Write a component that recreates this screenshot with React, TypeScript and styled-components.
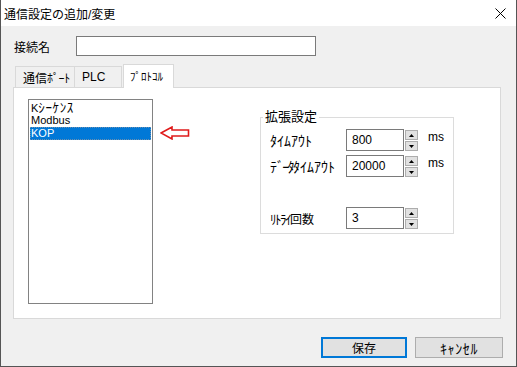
import styled, { createGlobalStyle } from "styled-components";

const GlobalStyle = createGlobalStyle`
    html, body {
        margin: 0;
        padding: 0;
        background: #f0f0f0;
    }
    body {
        font-family: "Liberation Sans", "Noto Sans CJK JP", sans-serif;
        font-size: 12px;
        color: #000;
    }
`;

const Window = styled.div`
    width: 517px;
    height: 367px;
    box-sizing: border-box;
    border: 1px solid #555;
    border-top: none;
    background: #f0f0f0;
    display: flex;
    flex-direction: column;
`;

const TitleBar = styled.div`
    height: 26px;
    flex-shrink: 0;
    background: #fff;
    display: flex;
    align-items: center;
    justify-content: space-between;
    padding: 0 10px 0 3px;
    font-size: 12px;
`;

const CloseIcon = styled.svg`
    width: 11px;
    height: 11px;
`;

const Body = styled.div`
    flex: 1;
    display: flex;
    flex-direction: column;
    padding: 10px 15px 8px 12px;
`;

const NameRow = styled.div`
    display: flex;
    align-items: center;
    height: 20px;
    padding-left: 1px;
`;

const NameLabel = styled.span`
    width: 62px;
    font-size: 12px;
`;

const TextBox = styled.div`
    width: 240px;
    height: 20px;
    box-sizing: border-box;
    border: 1px solid #7a7a7a;
    background: #fff;
`;

// half-width katakana: the original UI font draws them larger than Noto does
const Kana = styled.span<{ size?: number; sp?: number }>`
    font-size: ${(p) => p.size ?? 14}px;
    letter-spacing: ${(p) => p.sp ?? 0}px;
`;

const TabStrip = styled.div`
    margin-top: 8px;
    height: 23px;
    display: flex;
    align-items: flex-end;
    padding-left: 2px;
`;

const Tab = styled.div<{ active?: boolean; w: number }>`
    position: relative;
    box-sizing: border-box;
    width: ${(p) => p.w}px;
    height: ${(p) => (p.active ? 24 : 21)}px;
    margin-bottom: ${(p) => (p.active ? -1 : 0)}px;
    margin-left: ${(p) => (p.active ? 1 : -1)}px;
    background: ${(p) => (p.active ? "#fff" : "#f0f0f0")};
    border: 1px solid #d9d9d9;
    border-bottom: none;
    display: flex;
    align-items: ${(p) => (p.active ? "flex-start" : "center")};
    padding: ${(p) => (p.active ? "3px 0 0 6px" : "0 0 0 7px")};
    font-size: ${(p) => (p.active ? 11 : 12)}px;
    white-space: nowrap;
    z-index: ${(p) => (p.active ? 1 : 0)};
    &:first-child {
        margin-left: 0;
    }
`;

const Panel = styled.div`
    height: 232px;
    box-sizing: border-box;
    border: 1px solid #d9d9d9;
    background: #fff;
    display: flex;
    align-items: flex-start;
    padding: 11px 0 0 14px;
`;

const ListBox = styled.div`
    width: 125px;
    height: 205px;
    box-sizing: border-box;
    border: 1px solid #828282;
    padding: 1px;
`;

const ListItem = styled.div<{ selected?: boolean }>`
    height: 13px;
    line-height: 13px;
    padding-left: 1px;
    box-sizing: border-box;
    font-size: 11px;
    white-space: nowrap;
    background: ${(p) => (p.selected ? "#0078d7" : "transparent")};
    color: ${(p) => (p.selected ? "#fff" : "#000")};
    outline: ${(p) => (p.selected ? "1px dotted #6a8fb0" : "none")};
    outline-offset: -1px;
`;

const Arrow = styled.svg`
    margin: 27px 0 0 7px;
    width: 30px;
    height: 14px;
    flex-shrink: 0;
`;

const Group = styled.fieldset`
    margin: 11px 0 0 70px;
    padding: 0 0 4px 9px;
    width: 194px;
    box-sizing: border-box;
    border: 1px solid #dcdcdc;
    min-width: 0;
`;

const Legend = styled.legend`
    margin-left: -7px;
    padding: 0 2px;
    font-size: 13px;
    line-height: 14px;
`;

const Row = styled.div<{ top: number }>`
    display: flex;
    align-items: center;
    height: 22px;
    margin-top: ${(p) => p.top}px;
`;

const RowLabel = styled.span`
    width: 76px;
    font-size: 12px;
    white-space: nowrap;
`;

const SpinBox = styled.div`
    display: flex;
    align-items: flex-start;
    height: 22px;
`;

const SpinInput = styled.div`
    width: 58px;
    height: 22px;
    box-sizing: border-box;
    border: 1px solid #7a7a7a;
    background: #fff;
    padding-left: 5px;
    display: flex;
    align-items: center;
    font-size: 12px;
`;

const SpinButtons = styled.div`
    margin: 1px 0 0 1px;
    display: flex;
    flex-direction: column;
    gap: 1px;
`;

const SpinButton = styled.div`
    width: 13px;
    height: 10px;
    box-sizing: border-box;
    border: 1px solid #adadad;
    background: #e1e1e1;
    display: flex;
    align-items: center;
    justify-content: center;
`;

const Unit = styled.span`
    align-self: flex-start;
    margin: 1px 0 0 10px;
    font-size: 12px;
    line-height: 14px;
`;

const Footer = styled.div`
    margin: 18px -2px 0 0;
    display: flex;
    justify-content: flex-end;
    gap: 8px;
`;

const Button = styled.div<{ primary?: boolean }>`
    width: ${(p) => (p.primary ? 86 : 88)}px;
    height: 21px;
    box-sizing: border-box;
    border: ${(p) => (p.primary ? "2px solid #0078d7" : "1px solid #adadad")};
    background: #e1e1e1;
    display: flex;
    align-items: center;
    justify-content: center;
    font-size: 12px;
`;

function Triangle({ up }: { up?: boolean }) {
    return (
        <svg width="5" height="3" viewBox="0 0 5 3">
            <path d={up ? "M0 3 L2.5 0 L5 3 Z" : "M0 0 L5 0 L2.5 3 Z"} fill="#000" />
        </svg>
    );
}

function Spinner({ value }: { value: string }) {
    return (
        <SpinBox>
            <SpinInput>{value}</SpinInput>
            <SpinButtons>
                <SpinButton><Triangle up /></SpinButton>
                <SpinButton><Triangle /></SpinButton>
            </SpinButtons>
        </SpinBox>
    );
}

const protocols = [
    { id: "k", label: <>K<Kana size={13} sp={0.6}>ｼｰｹﾝｽ</Kana></> },
    { id: "modbus", label: "Modbus" },
    { id: "kop", label: "KOP" },
];

function App() {
    return (
        <>
            <GlobalStyle />
            <Window>
                <TitleBar>
                    <span>通信設定の追加/変更</span>
                    <CloseIcon viewBox="0 0 11 11">
                        <path d="M0.5 0.5 L10.5 10.5 M10.5 0.5 L0.5 10.5" stroke="#000" strokeWidth="1" />
                    </CloseIcon>
                </TitleBar>
                <Body>
                    <NameRow>
                        <NameLabel>接続名</NameLabel>
                        <TextBox />
                    </NameRow>
                    <TabStrip>
                        <Tab w={60}>通信<Kana size={12} sp={-0.4}>ﾎﾟｰﾄ</Kana></Tab>
                        <Tab w={48}>PLC</Tab>
                        <Tab w={51} active>ﾌﾟﾛﾄｺﾙ</Tab>
                    </TabStrip>
                    <Panel>
                        <ListBox>
                            {protocols.map((p) => (
                                <ListItem key={p.id} selected={p.id === "kop"}>{p.label}</ListItem>
                            ))}
                        </ListBox>
                        <Arrow viewBox="0 0 30 14">
                            <path
                                d="M1 7 L12 1 L12 4 L28.5 4 L28.5 10 L12 10 L12 13 Z"
                                fill="#fff"
                                stroke="#e01b1b"
                                strokeWidth="1.6"
                                strokeLinejoin="miter"
                            />
                        </Arrow>
                        <Group>
                            <Legend>拡張設定</Legend>
                            <Row top={5}>
                                <RowLabel><Kana>ﾀｲﾑｱｳﾄ</Kana></RowLabel>
                                <Spinner value="800" />
                                <Unit>ms</Unit>
                            </Row>
                            <Row top={4}>
                                <RowLabel>
                                    <Kana sp={-1.7}>ﾃﾞｰﾀ</Kana><Kana>ﾀｲﾑｱｳﾄ</Kana>
                                </RowLabel>
                                <Spinner value="20000" />
                                <Unit>ms</Unit>
                            </Row>
                            <Row top={30}>
                                <RowLabel><Kana size={13} sp={-1.5}>ﾘﾄﾗｲ</Kana>回数</RowLabel>
                                <Spinner value="3" />
                            </Row>
                        </Group>
                    </Panel>
                    <Footer>
                        <Button primary>保存</Button>
                        <Button><Kana sp={0.6}>ｷｬﾝｾﾙ</Kana></Button>
                    </Footer>
                </Body>
            </Window>
        </>
    );
}

export default App;
